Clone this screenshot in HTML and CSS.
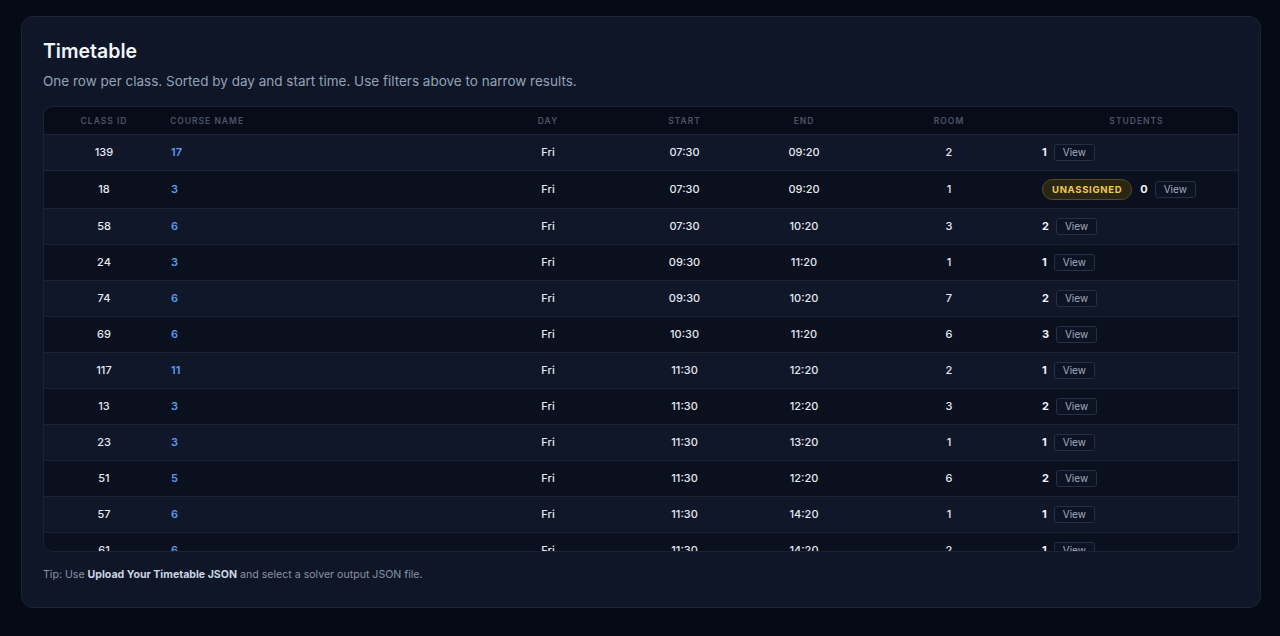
FILE: index.html
```html
<!DOCTYPE html>
<html lang="en">
<head>
    <meta charset="UTF-8">
    <meta name="viewport" content="width=device-width, initial-scale=1.0">
    <title>Timetable</title>
    <link rel="stylesheet" href="styles.css">
</head>
<body>

    <div class="card">
        <h1 class="card-title">Timetable</h1>
        <p class="card-sub">One row per class. Sorted by day and start time. Use filters above to narrow results.</p>

        <!-- Tabelle mit Scrollbereich -->
        <div class="table-wrap">
            <table class="timetable">
                <colgroup>
                    <col class="c-id"><col class="c-course"><col class="c-day"><col class="c-start">
                    <col class="c-end"><col class="c-room"><col class="c-students">
                </colgroup>
                <thead>
                    <tr>
                        <th>Class ID</th>
                        <th class="left">Course Name</th>
                        <th>Day</th>
                        <th>Start</th>
                        <th>End</th>
                        <th>Room</th>
                        <th>Students</th>
                    </tr>
                </thead>
                <tbody>
                    <tr><td>139</td><td class="course">17</td><td>Fri</td><td>07:30</td><td>09:20</td><td>2</td><td class="students"><b>1</b><button class="view-btn">View</button></td></tr>
                    <tr><td>18</td><td class="course">3</td><td>Fri</td><td>07:30</td><td>09:20</td><td>1</td><td class="students"><span class="badge">Unassigned</span><b>0</b><button class="view-btn">View</button></td></tr>
                    <tr><td>58</td><td class="course">6</td><td>Fri</td><td>07:30</td><td>10:20</td><td>3</td><td class="students"><b>2</b><button class="view-btn">View</button></td></tr>
                    <tr><td>24</td><td class="course">3</td><td>Fri</td><td>09:30</td><td>11:20</td><td>1</td><td class="students"><b>1</b><button class="view-btn">View</button></td></tr>
                    <tr><td>74</td><td class="course">6</td><td>Fri</td><td>09:30</td><td>10:20</td><td>7</td><td class="students"><b>2</b><button class="view-btn">View</button></td></tr>
                    <tr><td>69</td><td class="course">6</td><td>Fri</td><td>10:30</td><td>11:20</td><td>6</td><td class="students"><b>3</b><button class="view-btn">View</button></td></tr>
                    <tr><td>117</td><td class="course">11</td><td>Fri</td><td>11:30</td><td>12:20</td><td>2</td><td class="students"><b>1</b><button class="view-btn">View</button></td></tr>
                    <tr><td>13</td><td class="course">3</td><td>Fri</td><td>11:30</td><td>12:20</td><td>3</td><td class="students"><b>2</b><button class="view-btn">View</button></td></tr>
                    <tr><td>23</td><td class="course">3</td><td>Fri</td><td>11:30</td><td>13:20</td><td>1</td><td class="students"><b>1</b><button class="view-btn">View</button></td></tr>
                    <tr><td>51</td><td class="course">5</td><td>Fri</td><td>11:30</td><td>12:20</td><td>6</td><td class="students"><b>2</b><button class="view-btn">View</button></td></tr>
                    <tr><td>57</td><td class="course">6</td><td>Fri</td><td>11:30</td><td>14:20</td><td>1</td><td class="students"><b>1</b><button class="view-btn">View</button></td></tr>
                    <tr><td>61</td><td class="course">6</td><td>Fri</td><td>11:30</td><td>14:20</td><td>2</td><td class="students"><b>1</b><button class="view-btn">View</button></td></tr>
                    <tr><td>64</td><td class="course">6</td><td>Fri</td><td>12:30</td><td>14:20</td><td>4</td><td class="students"><b>2</b><button class="view-btn">View</button></td></tr>
                </tbody>
            </table>
        </div>

        <p class="tip">Tip: Use <strong>Upload Your Timetable JSON</strong> and select a solver output JSON file.</p>
    </div>

</body>
</html>
```

FILE: styles.css
```css
body {
    margin: 0;
    padding: 16px 19px 28px 21px;
    background-color: #050a15;
    font-family: 'Inter', 'Noto Sans', sans-serif;
    color: #e2e8f0;
}

.card {
    background-color: #0e1627;
    border: 1px solid #1b2537;
    border-radius: 12px;
    padding: 21px 21px 24px 21px;
    height: 545px;
}

.card-title {
    margin: 0;
    font-size: 19.5px;
    line-height: 26px;
    font-weight: 600;
    color: #f1f5f9;
}

.card-sub {
    margin: 7px 0 0 0;
    font-size: 13.5px;
    line-height: 20px;
    color: #94a3b8;
}

/* Scrollbereich der Tabelle */
.table-wrap {
    margin-top: 15px;
    height: 444px;
    overflow-y: auto;
    scrollbar-width: none;
    border: 1px solid #1a2436;
    border-radius: 10px;
}

.timetable {
    width: 100%;
    border-collapse: collapse;
    table-layout: fixed;
    font-size: 11px;
}

.c-id { width: 120px; }
.c-course { width: 307px; }
.c-day { width: 154px; }
.c-start { width: 119px; }
.c-end { width: 120px; }
.c-room { width: 170px; }
.c-students { width: 205px; }

.timetable th {
    position: sticky;
    top: 0;
    background-color: #070c18;
    height: 27px;
    padding: 0 6px;
    font-size: 8.5px;
    font-weight: 600;
    letter-spacing: 1px;
    text-transform: uppercase;
    color: #4b5568;
    text-align: center;
}

.timetable th.left {
    text-align: left;
}

.timetable td {
    padding: 8px 7px;
    line-height: 19px;
    text-align: center;
    font-weight: 500;
    color: #e5e9f0;
    border-top: 1px solid #1a2436;
}

.timetable tbody tr:nth-child(odd) td {
    background-color: #0f1729;
}

.timetable tbody tr:nth-child(even) td {
    background-color: #0a101e;
}

.timetable td.course {
    text-align: left;
    color: #5b9cf0;
    font-weight: 600;
}

.timetable td.students {
    text-align: left;
    padding-left: 8px;
}

.students b {
    font-weight: 700;
    color: #f1f5f9;
}

.view-btn {
    margin-left: 7px;
    padding: 1px 8px;
    font-family: inherit;
    font-size: 10px;
    line-height: 13px;
    color: #a3adbd;
    background-color: #0c1323;
    border: 1px solid #243046;
    border-radius: 3px;
    cursor: pointer;
}

.badge {
    display: inline-block;
    vertical-align: middle;
    margin-right: 8px;
    padding: 4px 9px;
    font-size: 9.5px;
    line-height: 11px;
    font-weight: 700;
    letter-spacing: 0.7px;
    text-transform: uppercase;
    color: #f2c94c;
    background-color: #2a2616;
    border: 1px solid #5c4c22;
    border-radius: 11px;
}

.tip {
    margin: 16px 0 0 0;
    font-size: 10.6px;
    color: #8a94a6;
}

.tip strong {
    color: #cbd5e1;
    font-weight: 700;
}
```
